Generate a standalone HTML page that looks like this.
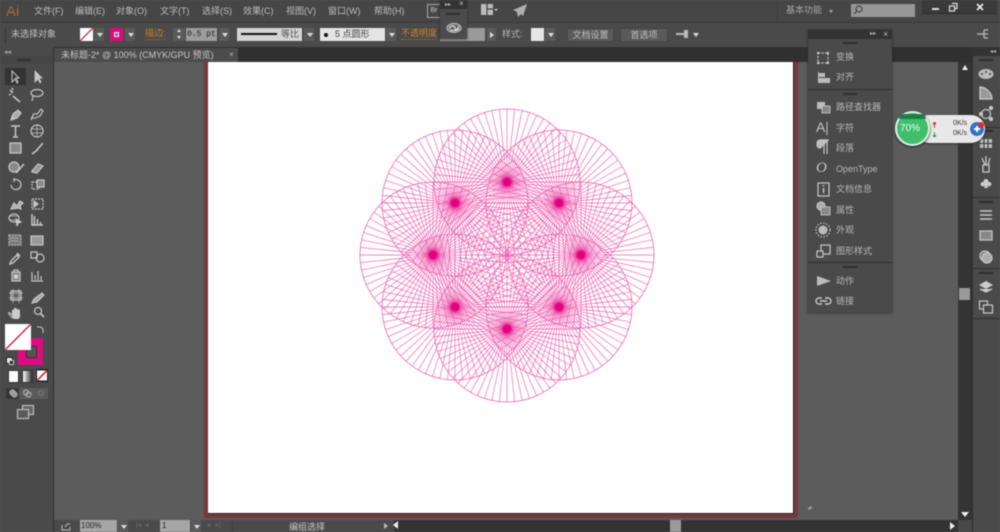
<!DOCTYPE html>
<html><head><meta charset="utf-8"><style>
html,body{margin:0;padding:0;background:#5c5c5c}
#r{position:relative;width:1000px;height:532px;overflow:hidden;background:#5c5c5c;font-family:"Liberation Sans","Noto Sans CJK SC",sans-serif;color:#c4c4c4;font-size:9px;filter:blur(.4px)}
#r div,#r span,#r svg{position:absolute}
.t{white-space:nowrap;line-height:12px}
.m{top:5px;font-size:9px;color:#bdbdbd}
.o{color:#c9802f}
.a{background:#5a5a5a;width:10px;height:13px}
.a:after{content:"";position:absolute;left:3px;top:5px;border:3px solid transparent;border-top:4px solid #ddd;border-bottom:0}
.i{left:836px;font-size:9px;color:#b8b8b8}
svg.c{fill:none;stroke:#c6c6c6;stroke-width:1.2;overflow:visible}
.btn{background:#5a5a5a;border:1px solid #444;height:12px;top:28px;text-align:center;line-height:12px;font-size:9px;color:#c0c0c0;box-sizing:content-box}
</style></head><body><div id="r">

<!-- top bars -->
<div style="left:0;top:0;width:1000px;height:22px;background:#464646"></div>
<div style="left:0;top:22px;width:1000px;height:1px;background:#383838"></div>
<div style="left:0;top:23px;width:1000px;height:24px;background:#4a4a4a"></div>
<div style="left:0;top:47px;width:1000px;height:15px;background:#303030"></div>

<div class="t" style="left:6px;top:3px;font-size:15px;line-height:17px;color:#a5683a">Ai</div>
<div class="t m" style="left:34px">文件(F)</div>
<div class="t m" style="left:75px">编辑(E)</div>
<div class="t m" style="left:116px">对象(O)</div>
<div class="t m" style="left:160px">文字(T)</div>
<div class="t m" style="left:202px">选择(S)</div>
<div class="t m" style="left:243px">效果(C)</div>
<div class="t m" style="left:286px">视图(V)</div>
<div class="t m" style="left:328px">窗口(W)</div>
<div class="t m" style="left:374px">帮助(H)</div>
<div class="t" style="left:427px;top:4px;width:12px;height:12px;border:1px solid #aaa;font-size:7px;line-height:12px;text-align:center;color:#ccc">Br</div>
<svg class="c" style="left:481px;top:4px" width="16" height="12"><rect x="0" y="0" width="12" height="11" fill="#bbb" stroke="none"/><path d="M6 0v11M6 5h6" stroke="#444"/><path d="M13 5l2 2 2-2" fill="#ccc" stroke="none"/></svg>
<svg style="left:513px;top:4px" width="15" height="14"><path d="M14 0L0 6l4 2 1 5 3-3 2 2z" fill="#b0b0b0"/></svg>
<div style="left:777px;top:0;width:1px;height:22px;background:#3c3c3c"></div>
<div class="t" style="left:786px;top:4px;color:#a8a8a8">基本功能</div>
<div style="left:829px;top:10px;border:2px solid transparent;border-top:3px solid #aaa"></div>
<div style="left:851px;top:4px;width:64px;height:13px;background:#969696"></div>
<svg class="c" style="left:853px;top:5px;stroke:#444" width="10" height="10"><circle cx="6" cy="4" r="3"/><path d="M4 6L1 9"/></svg>
<div style="left:922px;top:0;width:75px;height:13px;background:#3a3a3a;border-bottom:1px solid #2c2c2c"></div>
<div style="left:932px;top:8px;width:7px;height:2px;background:#ddd"></div>
<svg class="c" style="left:949px;top:3px;stroke:#ddd" width="9" height="9"><path d="M3 .5h5v5H6M.5 3h5v5h-5z"/></svg>
<svg class="c" style="left:976px;top:3px;stroke:#eee;stroke-width:1.6" width="8" height="8"><path d="M1 1l6 6M7 1L1 7"/></svg>

<!-- control bar -->
<div style="left:5px;top:27px;width:1px;height:16px;background:#333"></div>
<div class="t" style="left:11px;top:28px;color:#c2c2c2">未选择对象</div>
<svg style="left:80px;top:28px" width="13" height="13"><rect width="13" height="13" fill="#fff"/><path d="M0 13L13 0" stroke="#d8283c" stroke-width="1.3"/></svg>
<div class="a" style="left:94px;top:28px"></div>
<div style="left:110px;top:28px;width:13px;height:13px;background:#e0097f"></div>
<div style="left:114px;top:32px;width:3px;height:3px;border:1px solid #eee;background:#777"></div>
<div class="a" style="left:125px;top:28px"></div>
<div class="t o" style="left:145px;top:28px;border-bottom:1px dotted #a87030;line-height:11px">描边:</div>
<div style="left:173px;top:28px;width:12px;height:13px;background:#5a5a5a"></div>
<div style="left:177px;top:29px;border:2.5px solid transparent;border-bottom:3px solid #ddd;border-top:0"></div>
<div style="left:177px;top:36px;border:2.5px solid transparent;border-top:3px solid #ddd;border-bottom:0"></div>
<div class="t" style="left:186px;top:28px;width:31px;height:13px;background:#9c9c9c;color:#222;font-family:'Liberation Mono',monospace;font-size:8px;line-height:13px;text-indent:1px;overflow:hidden">0.5 pt</div>
<div class="a" style="left:219px;top:28px"></div>
<div style="left:237px;top:28px;width:65px;height:13px;background:#d4d4d4"></div>
<div style="left:241px;top:33px;width:36px;height:2px;background:#111"></div>
<div class="t" style="left:281px;top:28px;color:#555">等比</div>
<div class="a" style="left:304px;top:28px"></div>
<div style="left:320px;top:28px;width:65px;height:13px;background:#e4e4e4"></div>
<div style="left:324px;top:33px;width:4px;height:4px;border-radius:50%;background:#111"></div>
<div class="t" style="left:335px;top:28px;color:#444">5 点圆形</div>
<div class="a" style="left:386px;top:28px"></div>
<div class="t o" style="left:401px;top:28px;border-bottom:1px dotted #a87030;line-height:11px">不透明度</div>
<div style="left:440px;top:28px;width:45px;height:13px;background:#9a9a9a"></div>
<div style="left:487px;top:28px;width:9px;height:13px;background:#5a5a5a"></div>
<div style="left:490px;top:32px;border:3px solid transparent;border-left:4px solid #ddd;border-right:0"></div>
<div class="t" style="left:502px;top:28px;color:#b8b8b8">样式:</div>
<div style="left:531px;top:28px;width:13px;height:13px;background:#e6e6e6"></div>
<div class="a" style="left:545px;top:28px"></div>
<div class="btn" style="left:567px;width:45px">文档设置</div>
<div class="btn" style="left:620px;width:46px">首选项</div>
<svg style="left:676px;top:29px" width="24" height="12"><path d="M0 4h8V1h4v8H8V6H0z" fill="#bbb"/><path d="M17 4h6l-3 4z" fill="#ddd"/></svg>
<svg class="c" style="left:977px;top:29px;stroke:#bbb" width="12" height="11"><path d="M0 5h11M7 1h4M7 9h4M7 1v8"/></svg>

<!-- tab -->
<div style="left:54px;top:48px;width:184px;height:14px;background:#4c4c4c"></div>
<div class="t" style="left:61px;top:49px;color:#c6c6c6;font-size:9px">未标题-2* @ 100% (CMYK/GPU 预览)</div>
<div class="t" style="left:229px;top:49px;color:#bbb;font-size:8px">×</div>

<!-- canvas -->
<div style="left:54px;top:62px;width:904px;height:458px;background:#5c5c5c"></div>
<div style="left:204px;top:62px;width:594px;height:456px;background:#77393e"></div>
<div style="left:208px;top:62px;width:585px;height:451px;background:#fff;border-right:1px solid #222;border-bottom:1px solid #222"></div>
<div style="left:808px;top:507px;width:4px;height:2px;background:#aaa;transform:rotate(-30deg)"></div>

<!-- art -->
<svg style="left:0;top:0" width="1000" height="532" viewBox="0 0 1000 532">
<defs>
<g id="s5"><path id="l" d="M0 0V-73"/><use href="#l" transform="rotate(6)"/><use href="#l" transform="rotate(12)"/><use href="#l" transform="rotate(18)"/><use href="#l" transform="rotate(24)"/></g>
<g id="s15"><use href="#s5"/><use href="#s5" transform="rotate(30)"/><use href="#s5" transform="rotate(60)"/></g>
<g id="w" fill="none" stroke="#ee62b2" stroke-width=".65">
<use href="#s15"/><use href="#s15" transform="rotate(90)"/><use href="#s15" transform="rotate(180)"/><use href="#s15" transform="rotate(270)"/>
<circle r="73" stroke-width=".8"/></g>
<radialGradient id="h"><stop offset="0" stop-color="#e3007f"/><stop offset=".45" stop-color="#e3007f"/><stop offset=".7" stop-color="#ea3d9c" stop-opacity=".6"/><stop offset="1" stop-color="#ec5cad" stop-opacity="0"/></radialGradient>
</defs>
<use href="#w" transform="translate(507 182)"/>
<use href="#w" transform="translate(559 203)"/>
<use href="#w" transform="translate(581 255)"/>
<use href="#w" transform="translate(559 307)"/>
<use href="#w" transform="translate(507 329)"/>
<use href="#w" transform="translate(455 307)"/>
<use href="#w" transform="translate(433 255)"/>
<use href="#w" transform="translate(455 203)"/>
<g fill="url(#h)"><circle cx="507" cy="182" r="8"/><circle cx="559" cy="203" r="8"/><circle cx="581" cy="255" r="8"/><circle cx="559" cy="307" r="8"/><circle cx="507" cy="329" r="8"/><circle cx="455" cy="307" r="8"/><circle cx="433" cy="255" r="8"/><circle cx="455" cy="203" r="8"/></g>
</svg>

<!-- left toolbar -->
<div style="left:0;top:47px;width:53px;height:485px;background:#4a4a4a;border-right:1px solid #2e2e2e"></div>
<div class="t" style="left:4px;top:47px;font-size:7px;color:#aaa">◂◂</div>
<div style="left:1px;top:56px;width:51px;height:8px;background:#454545"></div>
<div style="left:17px;top:59px;width:14px;height:2px;background:#2e2e2e"></div>
<div style="left:5px;top:68px;width:21px;height:17px;background:#333"></div>
<svg class="c" style="left:0;top:0" width="54" height="425">
<path d="M12 71v11l3-3 2 4 1-1-2-4h3z" stroke-width="1"/>
<path d="M35 71v11l3-3 2 4 1-1-2-4h3z" fill="#c6c6c6" stroke-width=".8"/>
<path d="M10 90l3 3M13 96l7 6M12 88l1 2M9 95l2-1" stroke-width="1.5"/>
<ellipse cx="37" cy="93" rx="6" ry="3.5"/><path d="M33 96l-1 5"/>
<path d="M11 120l2-6 5-4 3 3-4 5z" fill="#aaa"/><path d="M11 120l3-3"/>
<path d="M31 120l2-5c1-3 3 1 5-2l3-4 2 2-3 5-5 2c-2 1-2-2-4 2z"/>
<path d="M11 126h9M15.500 126v11M13 137h5" stroke-width="1.5"/>
<circle cx="37" cy="131" r="6"/><path d="M32 129h10M32 133h10M37 125v12" stroke-width=".7"/>
<rect x="10" y="143" width="11" height="10" fill="#8a8a8a"/>
<path d="M32 154l4-3 7-8" stroke-width="1.6"/>
<circle cx="14" cy="167" r="5" fill="#888"/><path d="M16 173l8-9" stroke-width="1.6"/>
<path d="M32 171l6-7 5 2-6 7-5-1z" fill="#999"/>
<path d="M11 185a5 5 0 1 0 3-5M14 178v4" />
<rect x="32" y="182" width="7" height="7" stroke-dasharray="2 1"/><rect x="37" y="180" width="7" height="7" fill="#888"/>
<path d="M11 209l3-6 3 3 3-5 3 2-3 3 1 3-3-1z" fill="#aaa"/>
<path d="M32 199h11v10H32z" stroke-dasharray="2 1"/><path d="M34 201l4 3-4 3z" fill="#ccc"/>
<ellipse cx="14" cy="218" rx="5" ry="4"/><path d="M16 219l5 3-3 1-1 3z" fill="#ccc"/><path d="M10 216h8M10 220h5" stroke-width=".7"/>
<path d="M32 214v11h11M34.500 225v-9M37.500 225v-6M40.500 225v-3" stroke-width="1.5"/>
<rect x="9" y="235" width="12" height="10" fill="#777" stroke="#bbb" stroke-dasharray="2 1"/><path d="M11 238h8M11 241h8" stroke-dasharray="1 1"/>
<rect x="31" y="236" width="12" height="9" fill="#999"/>
<path d="M11 261l6-6 2 2-6 6-3 1zM17 253l3 3" stroke-width="1.4"/>
<rect x="31" y="252" width="6" height="6"/><circle cx="40" cy="258" r="4"/>
<rect x="12" y="272" width="8" height="9" fill="#888"/><circle cx="16" cy="276.500" r="2" fill="#ddd" stroke="none"/><path d="M14 272v-2h4v2"/>
<path d="M32 280v-8M35 280v-5M38 280v-9M41 280v-4M31 281h12" stroke-width="1.2"/>
<rect x="11" y="291" width="10" height="9" fill="#666" /><path d="M9 293h14M9 298h14M13 289v14M19 289v14" stroke-width=".8"/>
<path d="M32 303l2-4 8-6 2 2-7 7z" fill="#aaa"/>
<path d="M12 318v-7c0-2 2-2 2 0v-2c0-2 2-2 2 0v1c0-2 2-2 2 0 0-1 2-1 2 1v5c0 2-1 3-3 3h-3z" fill="#ccc" stroke="none"/><path d="M12 315l-2-2c-1-1-2 0-1 1l3 4" stroke-width="1"/>
<circle cx="38" cy="311" r="3.500"/><path d="M40.500 313.500l3.500 3.500" stroke-width="1.8"/>
</svg>
<div style="left:18px;top:338px;width:25px;height:27px;background:#e0097f"></div>
<div style="left:26px;top:346px;width:9px;height:10px;background:#555;border:1px solid #333"></div>
<svg style="left:5px;top:324px" width="26" height="26"><rect width="26" height="26" fill="#fff"/><path d="M0 26L26 0" stroke="#d8283c" stroke-width="1.5"/></svg>
<svg class="c" style="left:36px;top:326px" width="9" height="8"><path d="M1 1h4l2 2v4" stroke-width="1"/></svg>
<div style="left:6px;top:357px;width:5px;height:5px;background:#eee;border:1px solid #222"></div>
<div style="left:9px;top:360px;width:3px;height:3px;background:#222;border:1px solid #ccc"></div>
<div style="left:8px;top:370px;width:9px;height:11px;background:#fff;border:1px solid #333"></div>
<div style="left:22px;top:370px;width:9px;height:11px;background:linear-gradient(90deg,#fff,#333);border:1px solid #333"></div>
<svg style="left:36px;top:369px" width="12" height="13"><rect width="12" height="13" fill="#222"/><rect x="1" y="1.500" width="10" height="10" fill="#fff"/><path d="M1 11.500L11 1.500" stroke="#d8283c" stroke-width="1.6"/></svg>
<div style="left:6px;top:388px;width:42px;height:11px;background:#5a5a5a"></div>
<div style="left:6px;top:388px;width:13px;height:11px;background:#363636"></div>
<svg class="c" style="left:9px;top:389px;stroke:#aaa" width="36" height="9"><circle cx="3.500" cy="3.500" r="2.500" fill="#999"/><circle cx="5.500" cy="5.500" r="2.500" fill="#999"/><circle cx="17" cy="3.500" r="2.500"/><circle cx="19.500" cy="5.500" r="2.500"/><circle cx="32" cy="4" r="2.500" stroke="#777"/></svg>
<svg class="c" style="left:17px;top:405px;stroke:#bbb" width="18" height="14"><rect x="5.500" y=".5" width="11" height="9" fill="#666"/><rect x=".5" y="4.500" width="11" height="9" fill="#5a5a5a"/></svg>

<!-- floating CC panel -->
<div style="left:440px;top:0;width:27px;height:39px;background:#4b4b4b;box-shadow:0 0 2px #222"></div>
<div style="left:440px;top:0;width:27px;height:9px;background:#333"></div>
<div class="t" style="left:445px;top:-1px;font-size:6px;color:#bbb">▸▸</div>
<div class="t" style="left:459px;top:-2px;font-size:8px;color:#ccc">×</div>
<div style="left:446px;top:13px;width:14px;height:2px;background:#2e2e2e"></div>
<svg class="c" style="left:446px;top:22px;stroke:#bbb" width="16" height="12"><ellipse cx="8" cy="6" rx="7" ry="4.500" fill="#666"/><path d="M3 7c2-5 6-3 6-1s3 2 4-2" stroke="#ddd"/><path d="M4 8c3 1 6 1 9-1" stroke="#ddd"/></svg>

<!-- scrollbar + right dock -->
<div style="left:958px;top:62px;width:14px;height:458px;background:#343434"></div>
<div style="left:962px;top:65px;border:3.500px solid transparent;border-bottom:5px solid #eee;border-top:0"></div>
<div style="left:959px;top:288px;width:11px;height:12px;background:#9a9a9a"></div>
<div style="left:961px;top:512px;border:4px solid transparent;border-top:5px solid #eee;border-bottom:0"></div>
<div style="left:958px;top:520px;width:42px;height:12px;background:#484848"></div>
<div style="left:972px;top:47px;width:28px;height:485px;background:#4a4a4a;border-left:1px solid #2e2e2e;box-sizing:border-box"></div>
<div style="left:971px;top:47px;width:29px;height:9px;background:#333"></div>
<div class="t" style="left:990px;top:46px;font-size:6px;color:#bbb">◂◂</div>
<div style="left:972px;top:127px;width:28px;height:1px;background:#2e2e2e"></div>
<div style="left:972px;top:197px;width:28px;height:1px;background:#2e2e2e"></div>
<div style="left:972px;top:268px;width:28px;height:1px;background:#2e2e2e"></div>
<div style="left:972px;top:318px;width:28px;height:1px;background:#2e2e2e"></div>
<div style="left:979px;top:59px;width:14px;height:2px;background:#2e2e2e"></div>
<div style="left:979px;top:130px;width:14px;height:2px;background:#2e2e2e"></div>
<div style="left:979px;top:201px;width:14px;height:2px;background:#2e2e2e"></div>
<div style="left:979px;top:272px;width:14px;height:2px;background:#2e2e2e"></div>
<svg class="c" style="left:972px;top:0" width="28" height="320">
<ellipse cx="14" cy="74" rx="7.500" ry="5" fill="#bbb" stroke="none"/><circle cx="10" cy="74" r="1" fill="#444" stroke="none"/><circle cx="14" cy="72" r="1" fill="#444" stroke="none"/><circle cx="18" cy="74" r="1" fill="#444" stroke="none"/>
<path d="M8 87c6 0 12 6 12 12H8z" fill="#999" stroke="#ccc"/>
<circle cx="14" cy="114" r="4.500"/><circle cx="19" cy="108" r="1.500" fill="#ccc"/><circle cx="9" cy="114" r="1.500" fill="#ccc"/><circle cx="19" cy="119" r="1.500" fill="#ccc"/>
<rect x="8" y="139" width="12" height="9" fill="#bbb" stroke="none"/><path d="M12 139v9M16 139v9M8 143.500h12" stroke="#333" stroke-width="1"/>
<path d="M11 165h6v7h-6zM10 158l3 7M14 156v9M18 158l-2 7" stroke-width="1.300"/>
<path d="M14 179c-2 0-3 2-2 3-3-1-5 3-2 4 1 1 3 0 3-1l-1 3h4l-1-3c0 1 2 2 3 1 3-1 1-5-2-4 1-1 0-3-2-3z" fill="#ccc" stroke="none"/>
<path d="M8 211h12M8 215h12M8 219h12" stroke-width="1.400"/>
<rect x="8" y="231" width="12" height="9" fill="#888"/>
<circle cx="13" cy="256" r="5" fill="#777"/><circle cx="15" cy="258" r="5" fill="#aaa"/>
<path d="M14 281l7 4-7 4-7-4zM8 289l6 3 6-3" fill="#ccc" stroke="none"/><path d="M8 289l6 3 6-3" stroke-width="1.300"/>
<rect x="7.500" y="301" width="8" height="8"/><rect x="11.500" y="305" width="9" height="8" fill="#4a4a4a"/>
</svg>

<!-- panel -->
<div style="left:808px;top:30px;width:84px;height:283px;background:#4a4a4a;box-shadow:0 0 2px #222"></div>
<div style="left:808px;top:30px;width:84px;height:9px;background:#333"></div>
<div class="t" style="left:870px;top:28px;font-size:6px;color:#bbb">▸▸</div>
<div class="t" style="left:883px;top:28px;font-size:9px;color:#bbb">×</div>
<div style="left:808px;top:89px;width:84px;height:1px;background:#2e2e2e"></div>
<div style="left:808px;top:262px;width:84px;height:1px;background:#2e2e2e"></div>
<div style="left:843px;top:42px;width:14px;height:2px;background:#2e2e2e"></div>
<div style="left:843px;top:93px;width:14px;height:2px;background:#2e2e2e"></div>
<div style="left:843px;top:266px;width:14px;height:2px;background:#2e2e2e"></div>
<div class="t i" style="top:51px">变换</div>
<div class="t i" style="top:71px">对齐</div>
<div class="t i" style="top:101px">路径查找器</div>
<div class="t i" style="top:122px">字符</div>
<div class="t i" style="top:142px">段落</div>
<div class="t i" style="top:163px">OpenType</div>
<div class="t i" style="top:183px">文档信息</div>
<div class="t i" style="top:204px">属性</div>
<div class="t i" style="top:224px">外观</div>
<div class="t i" style="top:245px">图形样式</div>
<div class="t i" style="top:275px">动作</div>
<div class="t i" style="top:295px">链接</div>
<svg class="c" style="left:808px;top:0" width="30" height="310">
<rect x="10" y="53" width="10" height="10" stroke-dasharray="2 1.500"/><path d="M9 52h2v2H9zM19 52h2v2h-2zM9 62h2v2H9zM19 62h2v2h-2z" fill="#ccc" stroke="none"/>
<path d="M10 72h1v11h-1zM10 73h7v4h-7zM10 78h12v5H10z" fill="#bbb" stroke="none"/>
<rect x="9" y="102" width="8" height="7" fill="#bbb" stroke="none"/><rect x="14" y="106" width="8" height="7" fill="#888" stroke="#ccc" stroke-width=".8"/>
<path d="M19 122v13" stroke-width="1"/>
<path d="M13 148v-8h8M16 140v14M19 140v14M13 148c-3 0-4-1-4-4s2-4 4-4" fill="#bbb"/>
<rect x="10" y="183" width="11" height="13"/><path d="M15.500 185v1.500M15.500 188v5" stroke-width="1.500"/>
<circle cx="13" cy="206" r="4" fill="#aaa"/><rect x="13" y="207" width="9" height="8" fill="#888" stroke="#ccc" stroke-width=".8"/>
<circle cx="15" cy="230" r="4.500" fill="#bbb" stroke="none"/><circle cx="15" cy="230" r="7" stroke-dasharray="1.500 1.500"/>
<rect x="13" y="245" width="9" height="9"/><rect x="9" y="251" width="6" height="6" fill="#4a4a4a"/>
<path d="M9 276l14 5-14 5z" fill="#bbb" stroke="none"/>
<path d="M14 298h-3a3 3 0 0 0 0 6h3M17 298h3a3 3 0 0 1 0 6h-3M12 301h7" stroke-width="1.400"/>
</svg>
<div class="t" style="left:816px;top:120px;font-size:14px;line-height:15px;color:#c6c6c6">A</div>
<div class="t" style="left:816px;top:160px;font-size:15px;line-height:17px;color:#c6c6c6;font-family:'Liberation Serif',serif;font-style:italic">O</div>

<!-- floating widget -->
<div style="left:915px;top:115px;width:70px;height:28px;border-radius:14px;background:#e8e8e8;box-shadow:0 1px 2px #333"></div>
<div style="left:895px;top:111px;width:31px;height:31px;border-radius:50%;background:#3fbf6b;border:2px solid #dff3e4;box-shadow:0 1px 2px #222;overflow:hidden"></div>
<div style="left:899px;top:114px;width:27px;height:5px;border-radius:12px 12px 0 0;background:#1f7d4b"></div>
<div class="t" style="left:900px;top:123px;font-size:10px;color:#e8ffee">70%</div>
<div style="left:933px;top:122px;width:3px;height:3px;border-radius:50%;background:#d33"></div>
<div style="left:934px;top:124px;width:1px;height:4px;background:#d33"></div>
<div style="left:934px;top:132px;width:1px;height:4px;background:#3a9a5a"></div>
<div style="left:933px;top:135px;width:3px;height:2px;background:#3a9a5a"></div>
<div class="t" style="left:953px;top:118px;font-size:7px;color:#333">0K/s</div>
<div class="t" style="left:953px;top:128px;font-size:7px;color:#333">0K/s</div>
<div style="left:970px;top:122px;width:14px;height:14px;border-radius:50%;background:#2f74d0"></div>
<div style="left:974px;top:128px;width:6px;height:2px;background:#fff"></div>
<div style="left:976px;top:126px;width:2px;height:6px;background:#fff"></div>
<div style="left:978px;top:122px;width:6px;height:6px;border-radius:50%;background:#e02b2b"></div>

<!-- status bar -->
<div style="left:54px;top:520px;width:340px;height:12px;background:#4a4a4a"></div>
<div style="left:394px;top:520px;width:564px;height:12px;background:#333"></div>
<svg class="c" style="left:61px;top:522px;stroke:#bbb" width="11" height="9"><path d="M1 3v5h8V5M4 5l2-3h3" stroke-width="1"/></svg>
<div class="t" style="left:80px;top:520px;width:37px;height:12px;background:#a6a6a6;color:#222;font-size:8px;text-indent:1px">100%</div>
<div class="a" style="left:118px;top:520px;height:12px"></div>
<div class="t" style="left:136px;top:520px;font-size:7px;color:#6c6c6c">|◂ &nbsp;◂</div>
<div class="t" style="left:160px;top:520px;width:30px;height:12px;background:#a6a6a6;color:#222;font-size:8px;text-indent:2px">1</div>
<div class="a" style="left:191px;top:520px;height:12px"></div>
<div class="t" style="left:208px;top:520px;font-size:7px;color:#6c6c6c">▸ &nbsp;▸|</div>
<div style="left:232px;top:520px;width:1px;height:12px;background:#3c3c3c"></div>
<div class="t" style="left:289px;top:521px;color:#c6c6c6">编组选择</div>
<div style="left:384px;top:523px;border:3px solid transparent;border-left:4px solid #bbb;border-right:0"></div>
<div style="left:393px;top:521px;border:4px solid transparent;border-right:5px solid #eee;border-left:0"></div>
<div style="left:670px;top:520px;width:11px;height:12px;background:#9a9a9a"></div>
<div style="left:950px;top:522px;border:4px solid transparent;border-left:5px solid #eee;border-right:0"></div>
</div></body></html>
